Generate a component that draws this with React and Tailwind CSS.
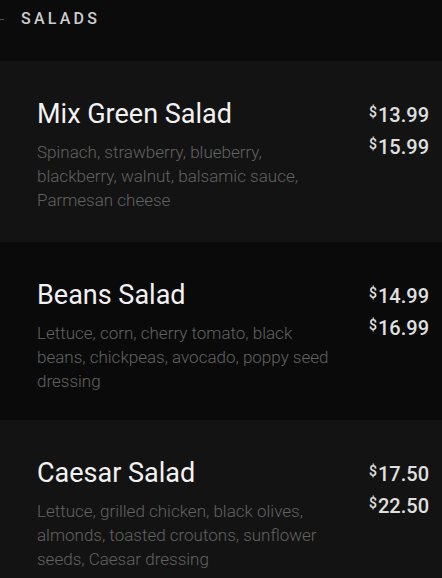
import React from 'react';

const SALADS = [
    {
        name: 'Mix Green Salad',
        description: 'Spinach, strawberry, blueberry, blackberry, walnut, balsamic sauce, Parmesan cheese',
        prices: ['13.99', '15.99'],
    },
    {
        name: 'Beans Salad',
        description: 'Lettuce, corn, cherry tomato, black beans, chickpeas, avocado, poppy seed dressing',
        prices: ['14.99', '16.99'],
    },
    {
        name: 'Caesar Salad',
        description: 'Lettuce, grilled chicken, black olives, almonds, toasted croutons, sunflower seeds, Caesar dressing',
        prices: ['17.50', '22.50'],
    },
];

const Price = ({ value }) => (
    <div className="flex items-start font-medium text-[#e0e0e0] leading-8">
        <span className="text-[14px] leading-none mt-[6px] mr-px">$</span>
        <span className="text-[20px]">{value}</span>
    </div>
);

export default function App() {
    return (
        <div className="h-[578px] w-[442px] bg-[#0b0b0b] overflow-hidden" style={{ fontFamily: 'Roboto, "Liberation Sans", sans-serif' }}>
            {/* Section header */}
            <div className="h-[61px] flex items-start pt-[9px]">
                <div className="w-[4px] h-px bg-[#555] mt-[10px]" />
                <h2 className="ml-[17px] text-[16px] leading-5 font-medium tracking-[0.2em] text-[#cdcdcd]">SALADS</h2>
            </div>

            {SALADS.map((item, i) => (
                <div
                    key={item.name}
                    className={`flex justify-between pl-[37px] pr-[13px] pt-[37px] ${i === 1 ? 'pb-[27px]' : 'pb-[30px]'} ${i % 2 === 0 ? 'bg-[#131313]' : 'bg-[#0a0a0a]'}`}
                >
                    <div className="w-[292px]">
                        <h3 className="text-[27px] leading-8 text-[#f2f2f2]">{item.name}</h3>
                        <p className="mt-[10px] text-[17px] leading-6 font-light text-[#626262]">{item.description}</p>
                    </div>
                    <div className="flex flex-col items-end pt-[1px]">
                        {item.prices.map(p => <Price key={p} value={p} />)}
                    </div>
                </div>
            ))}
        </div>
    );
}
